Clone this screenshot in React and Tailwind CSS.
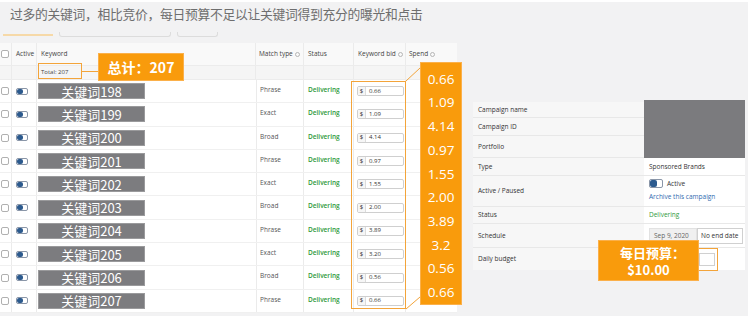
import React from "react";

const rows = [
  { kw: "关键词198", match: "Phrase", bid: "0.66", spend: "0.66" },
  { kw: "关键词199", match: "Exact", bid: "1.09", spend: "1.09" },
  { kw: "关键词200", match: "Broad", bid: "4.14", spend: "4.14" },
  { kw: "关键词201", match: "Phrase", bid: "0.97", spend: "0.97" },
  { kw: "关键词202", match: "Exact", bid: "1.55", spend: "1.55" },
  { kw: "关键词203", match: "Broad", bid: "2.00", spend: "2.00" },
  { kw: "关键词204", match: "Phrase", bid: "3.89", spend: "3.89" },
  { kw: "关键词205", match: "Exact", bid: "3.20", spend: "3.2" },
  { kw: "关键词206", match: "Broad", bid: "0.56", spend: "0.56" },
  { kw: "关键词207", match: "Phrase", bid: "0.66", spend: "0.66" },
];

const Info = () => (
  <span className="ml-[2px] inline-block w-[5px] h-[5px] rounded-full border border-[#b5b5b5] align-middle" />
);

const Check = () => (
  <div className="w-[8px] h-[8px] rounded-[2px] border border-[#b0b0b0] bg-white" />
);

const Toggle = ({ big }) => (
  <div
    className={
      "flex rounded-[2px] border border-[#8a96a8] bg-white overflow-hidden " +
      (big ? "w-[14px] h-[9px]" : "w-[12px] h-[7px]")
    }
  >
    <div className={"bg-[#2c5a8e] rounded-[2px] " + (big ? "w-[7px]" : "w-[6px]")} />
  </div>
);

const Cell = ({ w, children, className = "" }) => (
  <div className={"h-full border-r border-[#ebebeb] flex items-center whitespace-nowrap " + w + " " + className}>
    {children}
  </div>
);

const PanelRow = ({ label, h, children, last }) => (
  <>
    <div
      className={
        "bg-[#f7f7f7] pl-[5px] flex items-center text-[6.5px] text-[#333] " +
        h +
        (last ? "" : " border-b border-[#e8e8e8]")
      }
    >
      {label}
    </div>
    {children}
  </>
);

export default function App() {
  return (
    <div
      className="relative w-[750px] h-[316px] overflow-hidden bg-[#f2f2f3]"
      style={{ fontFamily: '"Open Sans", "Noto Sans", "Noto Sans CJK SC", sans-serif' }}
    >
      <div className="h-[2px] bg-white" />
      {/* title */}
      <div
        className="h-[29px] pl-[10px] pt-[2px] text-[12.8px] leading-[20px] text-[#6e6e6e] tracking-[-0.3px] whitespace-nowrap"
        style={{ fontFamily: '"Noto Sans CJK SC", "Noto Sans", sans-serif' }}
      >
        过多的关键词，相比竞价，每日预算不足以让关键词得到充分的曝光和点击
      </div>
      {/* faint tabs */}
      <div className="h-[12px] flex items-start gap-[6px] pl-[3px] pt-[1px]">
        <div className="w-[50px] h-[4px] border-b-2 border-[#f6d9a8]" />
        <div className="w-[112px] h-[5px] rounded-b-[3px] border-b border-x border-[#dcdcdc]" />
        <div className="w-[41px] h-[5px] rounded-b-[3px] border-b border-x border-[#dcdcdc]" />
      </div>

      <div className="flex">
        {/* keyword table */}
        <div className="w-[457px] bg-white text-[6.5px] text-[#444]">
          <div className="h-[23px] flex bg-[#f9f9f9] border-b border-[#ececec]">
            <Cell w="w-[12px]" className="pl-[1px]">
              <Check />
            </Cell>
            <Cell w="w-[25px]" className="pl-[4px]">Active</Cell>
            <Cell w="w-[219px]" className="pl-[4px]">Keyword</Cell>
            <Cell w="w-[48px]" className="pl-[3px]">
              Match type <Info />
            </Cell>
            <Cell w="w-[50px]" className="pl-[4px]">Status</Cell>
            <Cell w="w-[52px]" className="pl-[4px]">
              Keyword bid <Info />
            </Cell>
            <Cell w="w-[51px]" className="pl-[3px] border-r-0">
              Spend <Info />
            </Cell>
          </div>
          <div className="h-[14px] flex bg-[#f5f5f5] border-b border-[#ececec]">
            <Cell w="w-[12px]" />
            <Cell w="w-[25px]" />
            <Cell w="w-[219px]" className="pl-[4px] text-[6px]">Total: 207</Cell>
            <Cell w="w-[48px]" />
            <Cell w="w-[50px]" />
            <Cell w="w-[52px]" />
            <Cell w="w-[51px]" className="border-r-0" />
          </div>
          {rows.map((r) => (
            <div key={r.kw} className="h-[23.3px] flex border-b border-[#f0f0f0]">
              <Cell w="w-[12px]" className="pl-[1px]">
                <Check />
              </Cell>
              <Cell w="w-[25px]" className="pl-[4px]">
                <Toggle />
              </Cell>
              <div className="w-[219px] h-full flex items-center pl-[1px]">
                <div
                  className="w-[107px] h-[16px] bg-[#7c7c7f] border border-[#9a9a9c] flex items-center justify-center text-white text-[13px] leading-none"
                  style={{ fontFamily: '"Noto Sans CJK SC", "Noto Sans", sans-serif' }}
                >
                  {r.kw}
                </div>
              </div>
              <Cell w="w-[48px]" className="pl-[3px] items-start pt-[5px] border-l border-[#ebebeb] text-[#555]">
                {r.match}
              </Cell>
              <Cell w="w-[50px]" className="pl-[4px] items-start pt-[5px] text-[#2f9a3c] font-semibold">
                Delivering
              </Cell>
              <Cell w="w-[52px]" className="pl-[3px]">
                <div className="w-[47px] h-[10px] flex items-center rounded-[2px] border border-[#cfcfcf] bg-white text-[6px] text-[#333]">
                  <span className="w-[8px] h-full flex items-center justify-center border-r border-[#dcdcdc] bg-[#f6f6f6]">
                    $
                  </span>
                  <span className="pl-[3px]">{r.bid}</span>
                </div>
              </Cell>
              <Cell w="w-[51px]" className="border-r-0" />
            </div>
          ))}
        </div>

        {/* campaign settings panel */}
        <div className="flex-1 pl-[16px] pt-[59px]">
          <div className="w-[272px] grid grid-cols-[171px_101px] bg-white">
            <PanelRow label="Campaign name" h="h-[16px]">
              <div className="row-span-3 bg-[#7b7b7e] -mt-[2px]" />
            </PanelRow>
            <PanelRow label="Campaign ID" h="h-[18px]" />
            <PanelRow label="Portfolio" h="h-[22px]" />
            <PanelRow label="Type" h="h-[18px]">
              <div className="pl-[5px] flex items-center text-[6.5px] text-[#333] border-b border-[#e8e8e8]">
                Sponsored Brands
              </div>
            </PanelRow>
            <PanelRow label="Active / Paused" h="h-[31px]">
              <div className="pl-[5px] pt-[3px] text-[6.5px] border-b border-[#e8e8e8]">
                <div className="flex items-center gap-[4px] text-[#333]">
                  <Toggle big />
                  <span>Active</span>
                </div>
                <div className="mt-[3px] text-[#2f6bb0]">Archive this campaign</div>
              </div>
            </PanelRow>
            <PanelRow label="Status" h="h-[17px]">
              <div className="pl-[5px] flex items-center text-[6.5px] text-[#2f9a3c] border-b border-[#e8e8e8]">
                Delivering
              </div>
            </PanelRow>
            <PanelRow label="Schedule" h="h-[24px]">
              <div className="pl-[5px] flex items-center text-[6.5px] text-[#333] border-b border-[#e8e8e8] whitespace-nowrap">
                <div className="w-[48px] h-[16px] flex items-center pl-[4px] bg-[#f0f0f0] border border-[#e2e2e2] text-[#666]">
                  Sep 9, 2020
                </div>
                <div className="w-[46px] h-[16px] flex items-center pl-[3px] bg-white border border-[#d0d0d0]">
                  No end date
                </div>
              </div>
            </PanelRow>
            <PanelRow label="Daily budget" h="h-[22px]" last>
              <div className="flex items-center pl-[55px]">
                <div className="w-[16px] h-[13px] bg-white border border-[#d0d0d0]" />
              </div>
            </PanelRow>
          </div>
        </div>
      </div>

      {/* annotations */}
      <div className="absolute left-[38px] top-[63px] w-[44px] h-[16px] border border-[#f3a43a]" />
      <div className="absolute left-[98px] top-[53px] w-[86px] h-[28px] bg-[#f99b0c] border border-[#fbb04a] flex items-center justify-center text-white font-bold text-[14px]"
        style={{ fontFamily: '"Noto Sans CJK SC", "Noto Sans", sans-serif' }}>
        总计：207
      </div>
      <div className="absolute left-[351px] top-[81px] w-[55px] h-[228px] border border-[#f3a43a]" />
      <div className="absolute left-[420px] top-[62px] w-[42px] h-[243px] bg-[#f99b0c] border border-[#fbb04a] pt-[4px] flex flex-col items-center text-white text-[13.5px]"
        style={{ fontFamily: '"Open Sans", "Noto Sans", sans-serif' }}>
        {rows.map((r, i) => (
          <div key={i} className="h-[23.8px] flex items-center">
            {r.spend}
          </div>
        ))}
      </div>
      <div className="absolute left-[698px] top-[248px] w-[20px] h-[23px] border border-[#f3a43a]" />
      <div className="absolute left-[598px] top-[240px] w-[101px] h-[41px] bg-[#f99b0c] border border-[#fbb04a] flex flex-col items-center justify-center text-white font-bold text-[13px] leading-[17px]"
        style={{ fontFamily: '"Noto Sans CJK SC", "Noto Sans", sans-serif' }}>
        <div className="pl-[8px]">每日预算：</div>
        <div>$10.00</div>
      </div>
      <svg className="absolute left-0 top-0 pointer-events-none" width="750" height="316">
        <g stroke="#f3a43a" strokeWidth="1" fill="none">
          <line x1="82" y1="71.5" x2="98" y2="71.5" />
          <line x1="406" y1="81" x2="420" y2="68" />
          <line x1="406" y1="309" x2="420" y2="297" />
        </g>
      </svg>
      <div className="absolute right-0 top-0 w-[2px] h-full bg-white" />
    </div>
  );
}
